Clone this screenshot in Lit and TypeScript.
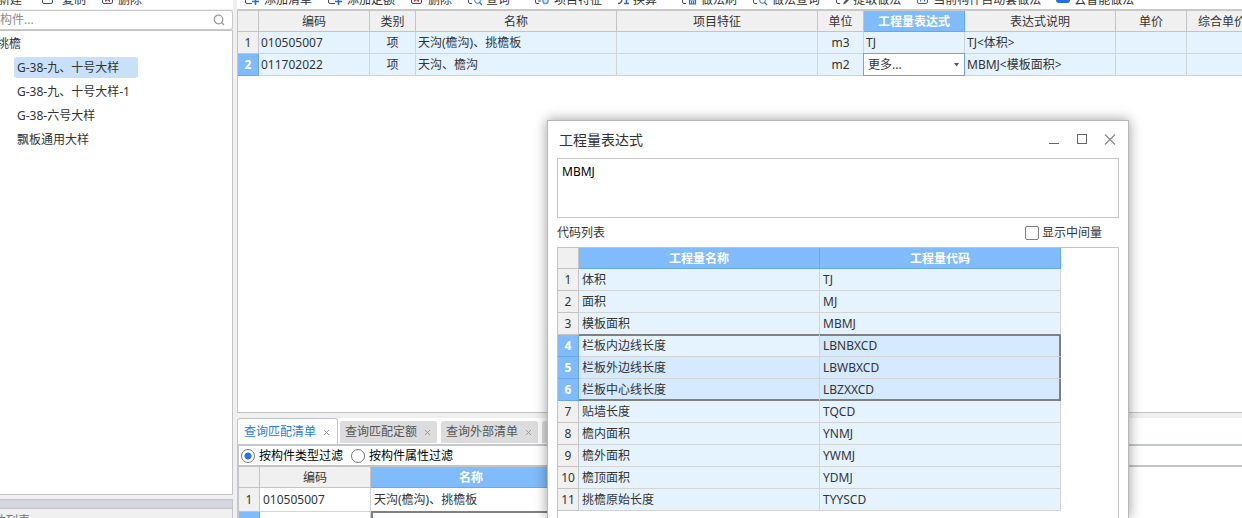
import { LitElement, html, css, svg, nothing } from "lit";
import { customElement, state } from "lit/decorators.js";
import { classMap } from "lit/directives/class-map.js";

const base = css`
  * { box-sizing: border-box; }
  :host {
    font-family: "Noto Sans", "Noto Sans CJK SC", sans-serif;
    font-size: 12px;
    line-height: 20px;
    color: #333;
  }
  button, input, select, textarea { font: inherit; color: inherit; margin: 0; }
  button { border: 0; padding: 0; background: none; }
`;

const gridStyles = css`
  table { border-collapse: separate; border-spacing: 0; table-layout: fixed; width: 0; }
  th, td {
    height: 22px;
    padding: 0 0 0 3px;
    line-height: 20px;
    font-weight: 400;
    text-align: left;
    white-space: nowrap;
    overflow: hidden;
    border-right: 1px solid #d4d4d4;
    border-bottom: 1px solid #d4d4d4;
  }
  td { background: #e5f3ff; }
  th { background: #f0f0f0; padding: 0; text-align: center; border-color: #c4c4c4; }
  thead th { height: 21px; padding-top: 2px; line-height: 18px; }
  th.on { background: #80bbfb; color: #fff; font-weight: 700; border-color: #69a7ea; }
  td.mid { text-align: center; padding: 0; }
  .w-no { width: 21px; }
  .w-code { width: 111px; }
  .w-kind { width: 46px; }
  .w-name { width: 201px; }
  .w-expr { width: 101px; }
  .w-note { width: 151px; }
  .w-price { width: 71px; }
  .w-half { width: 241px; }
`;

const dark = "#4a4f63";
const blue = "#1f6fe0";
const sheet = svg`<path d="M5 11.5H3A1.5 1.5 0 0 1 1.5 10V2.5A1.5 1.5 0 0 1 3 1h8a1.5 1.5 0 0 1 1.5 1.5V4" fill="none" stroke=${dark}/>`;
const icons: Record<string, unknown> = {
  add: svg`<path d="M8 11.5H3A1.5 1.5 0 0 1 1.5 10V2.5A1.5 1.5 0 0 1 3 1h8a1.5 1.5 0 0 1 1.5 1.5V4" fill="none" stroke=${dark}/><path d="M8 9.5h7M11.5 6v7" stroke=${blue} stroke-width="1.6"/>`,
  remove: svg`<rect x="1.5" y="1.5" width="10" height="10" rx="1.5" fill="none" stroke=${dark}/><path d="M4.5 9.5V6l4 3.5M8.5 9.5V6l-4 3.5" stroke="#d9303c" fill="none"/>`,
  copy: svg`<rect x="1.5" y="1.5" width="10" height="10" rx="1.5" fill="none" stroke=${dark}/>`,
  find: svg`${sheet}<circle cx="10.5" cy="8.5" r="2.8" fill="none" stroke=${blue}/><path d="M12.5 10.5l2.5 2.5" stroke=${blue} stroke-width="1.3"/>`,
  feature: svg`${sheet}<path d="M4 9h3" stroke=${dark}/><circle cx="11.5" cy="9" r="2.6" fill="#dceafe" stroke="#5b9af0" stroke-width="1.5"/>`,
  convert: svg`<path d="M1 11.5c3 0 4-2 4-5V2" fill="none" stroke=${dark} stroke-width="1.3"/><path d="M7 11.5h5M9.500 11V6L7.500 7.500" fill="none" stroke=${blue} stroke-width="1.6"/>`,
  brush: svg`${sheet}<path d="M8.500 12V8h6v4zM10.500 9v3M12.500 9v3" fill="none" stroke=${blue} stroke-width="1.2"/>`,
  pick: svg`${sheet}<path d="M8 12.500l1-2.500 5-5 1.500 1.500-5 5z" fill=${dark}/>`,
  auto: svg`<rect x="1.500" y="1.500" width="10" height="10" rx="1.500" fill="none" stroke=${blue}/><path d="M4.500 9.500V7.500h4v2" fill="none" stroke=${blue}/>`,
  cloud: svg`<rect x="0" y="1" width="14" height="10" rx="3" fill=${blue}/>`,
};

@customElement("tool-bar")
export class ToolBar extends LitElement {
  static properties = { items: { attribute: false } };
  declare items: [string, string, number, boolean?][];
  static styles = [base, css`
    :host { display: flex; align-items: flex-end; height: 9px; overflow: hidden; background: #fff; }
    button { display: flex; flex: none; align-items: center; gap: 4px; height: 18px; margin-right: 15px; white-space: nowrap; line-height: 18px; }
    button.group { margin-right: var(--group-gap, 24px); }
    svg { height: 16px; flex: none; }
  `];
  render() {
    return this.items.map(([icon, text, width, group]) => html`
      <button type="button" class=${classMap({ group: !!group })}>
        ${width ? html`<svg width=${width} viewBox="0 0 ${width} 16" aria-hidden="true">${icons[icon]}</svg>` : nothing}${text}
      </button>`);
  }
}

@customElement("component-panel")
export class ComponentPanel extends LitElement {
  @state() selected = 0;
  names = ["G-38-九、十号大样", "G-38-九、十号大样-1", "G-38-六号大样", "飘板通用大样"];
  tools = [["", "新建", 0, true], ["copy", "复制", 17], ["remove", "删除", 13]];
  static styles = [base, css`
    :host { display: flex; flex-direction: column; min-height: 0; margin-left: -32px; }
    tool-bar { --group-gap: 19px; padding-left: 30px; }
    .search { display: flex; align-items: center; height: 20px; margin-top: 1px; padding: 0 7px 0 8px; background: #fff; border: 1px solid #c8c8c8; border-left: 0; border-radius: 0 3px 3px 0; }
    .search input { flex: 1; min-width: 0; height: 18px; padding: 0; border: 0; outline: 0; background: none; }
    .search input::placeholder { color: #8c8c8c; opacity: 1; }
    .tree { flex: 1; min-height: 0; margin: 0; padding: 1px 0 0 28px; background: #fff; border: 1px solid #c4c4c8; overflow: hidden; }
    .root { height: 24px; line-height: 24px; }
    ul { list-style: none; margin: 0; padding: 0 0 0 17px; }
    li { height: 24px; padding: 1px 0; }
    li button { display: block; height: 21px; min-width: 124px; padding: 0 3px; border-radius: 3px; text-align: left; line-height: 20px; }
    li button.on { background: #c9e0fa; }
    .bar { height: 10px; margin-top: 4px; background: #d3d6dd; border: 1px solid #c4c4c8; }
    .list { height: 9px; overflow: hidden; padding: 2px 0 0 14px; color: #777; border-right: 1px solid #c4c4c8; }
  `];
  render() {
    return html`
      <tool-bar .items=${this.tools}></tool-bar>
      <label class="search">
        <input type="text" placeholder="搜索构件..." aria-label="搜索构件" />
        <svg width="12" height="12" viewBox="0 0 12 12" fill="none" stroke="#999" stroke-width="1.2"><circle cx="5.5" cy="5.5" r="4.3"/><path d="M8.5 8.5l2.5 2.5"/></svg>
      </label>
      <div class="tree">
        <div class="root">挑檐</div>
        <ul>${this.names.map((name, i) => html`<li><button type="button" class=${classMap({ on: i === this.selected })} @click=${() => (this.selected = i)}>${name}</button></li>`)}</ul>
      </div>
      <div class="bar"></div>
      <div class="list">构件列表</div>`;
  }
}

@customElement("bill-grid")
export class BillGrid extends LitElement {
  columns: [string, string, boolean?][] = [
    ["编码", "w-code"], ["类别", "w-kind"], ["名称", "w-name"], ["项目特征", "w-name"], ["单位", "w-kind"],
    ["工程量表达式", "w-expr", true], ["表达式说明", "w-note"], ["单价", "w-price"], ["综合单价", "w-price"],
  ];
  rows = [
    ["010505007", "项", "天沟(檐沟)、挑檐板", "", "m3", "TJ", "TJ<体积>", "", ""],
    ["011702022", "项", "天沟、檐沟", "", "m2", null, "MBMJ<模板面积>", "", ""],
  ];
  static styles = [base, gridStyles, css`
    :host { display: block; overflow: hidden; background: #fff; border: 1px solid #c4c4c4; border-top: 2px solid #c8c8c8; border-right: 0; }
    td { padding-left: 2px; }
    td.edit { padding: 0; overflow: visible; }
    .pick { position: relative; display: block; width: 102px; height: 23px; margin: -1px; }
    select { display: block; width: 100%; height: 100%; padding: 0 16px 0 4px; appearance: none; background: #fff; border: 1px solid #69a7ea; border-radius: 0; line-height: 20px; }
    .pick svg { position: absolute; right: 6px; top: 10px; }
  `];
  render() {
    return html`<table>
      <thead><tr><th class="w-no"></th>${this.columns.map(([t, w, on]) => html`<th class=${classMap({ [w]: true, on: !!on })}>${t}</th>`)}</tr></thead>
      <tbody>${this.rows.map((row, r) => html`<tr>
        <th class=${classMap({ on: r === 1 })}>${r + 1}</th>
        ${row.map((cell, c) => cell === null
          ? html`<td class="edit"><span class="pick"><select aria-label="工程量表达式"><option>更多...</option><option>MBMJ</option></select>
              <svg width="5" height="4" viewBox="0 0 5 4" aria-hidden="true"><path d="M0 0h5L2.5 3.5z" fill="#555"/></svg></span></td>`
          : html`<td class=${classMap({ mid: c === 1 || c === 4 })}>${cell}</td>`)}
      </tr>`)}</tbody>
    </table>`;
  }
}

@customElement("query-panel")
export class QueryPanel extends LitElement {
  tabs = ["查询匹配清单", "查询匹配定额", "查询外部清单", "查询清单库"];
  static styles = [base, gridStyles, css`
    :host { display: block; overflow: hidden; background: #fff; }
    .tabs { display: flex; align-items: flex-end; gap: 4px; height: 28px; border-bottom: 2px solid #c3c8ce; }
    .tab { display: flex; align-items: center; gap: 7px; height: 22px; margin-bottom: 1px; padding: 0 5px; border-radius: 3px 3px 0 0; background: #dcdcdc; color: #555; white-space: nowrap; }
    .tab.on { height: 26px; margin-right: -2px; margin-bottom: 0; padding: 0 6px; color: #2a7de0; background: #fff; border: 1px solid #c0c4ca; border-bottom: 0; }
    .tab svg { margin: 1px 1px 0 0; }
    .body { border-left: 2px solid #c3c7cc; }
    .filter { display: flex; align-items: center; gap: 8px; height: 21px; padding-left: 2px; border-bottom: 2px solid #c4c4c4; color: #000; }
    .filter label { display: flex; align-items: center; gap: 4px; height: 18px; line-height: 18px; }
    .filter input { appearance: none; width: 14px; height: 14px; border: 1px solid #777; border-radius: 50%; background: #fff; }
    .filter input:checked { background: radial-gradient(circle, #2478e0 0 3px, #fff 4px) padding-box; }
    tbody th, tbody td { height: 24px; }
    td { background: #fff; }
    .lead td:last-child { border-bottom-color: #808080; }
    .current td:last-child { box-shadow: inset 2px 1px #808080; }
  `];
  render() {
    return html`
      <div class="tabs">${this.tabs.map((t, i) => html`<button type="button" class=${classMap({ tab: true, on: i === 0 })}>${t}
        <svg width="7" height="7" viewBox="0 0 7 7" stroke="#999" aria-hidden="true"><path d="M1 1l5 5M6 1L1 6"/></svg></button>`)}</div>
      <div class="body">
        <div class="filter">
          <label><input type="radio" name="filter" checked />按构件类型过滤</label>
          <label><input type="radio" name="filter" />按构件属性过滤</label>
        </div>
        <table>
          <thead><tr><th class="w-no"></th><th class="w-code">编码</th><th class="w-name on">名称</th></tr></thead>
          <tbody>
            <tr class="lead"><th>1</th><td>010505007</td><td>天沟(檐沟)、挑檐板</td></tr>
            <tr class="current"><th class="on"></th><td></td><td></td></tr>
          </tbody>
        </table>
      </div>`;
  }
}

@customElement("expression-dialog")
export class ExpressionDialog extends LitElement {
  rows = [
    ["体积", "TJ"], ["面积", "MJ"], ["模板面积", "MBMJ"], ["栏板内边线长度", "LBNBXCD"], ["栏板外边线长度", "LBWBXCD"],
    ["栏板中心线长度", "LBZXXCD"], ["贴墙长度", "TQCD"], ["檐内面积", "YNMJ"], ["檐外面积", "YWMJ"], ["檐顶面积", "YDMJ"], ["挑檐原始长度", "TYYSCD"],
  ];
  static styles = [base, gridStyles, css`
    :host { display: flex; flex-direction: column; padding: 0 9px; background: #fff; border: 1px solid #b8b8b8; border-bottom: 0; box-shadow: 0 0 12px rgba(0, 0, 0, 0.4); }
    header { display: flex; align-items: center; justify-content: space-between; height: 37px; padding: 0 3px 0 2px; }
    h1 { margin: 0; font-size: 14px; line-height: 20px; font-weight: 400; }
    .controls { display: flex; gap: 16px; }
    .controls button { display: block; width: 12px; height: 12px; }
    .controls svg { display: block; }
    textarea { display: block; flex: none; width: 100%; height: 60px; padding: 3px 4px; resize: none; border: 1px solid #c8c8c8; border-radius: 0; outline: 0; color: #000; line-height: 20px; }
    .caption { display: flex; align-items: center; justify-content: space-between; height: 29px; padding-right: 17px; }
    .caption label { display: flex; align-items: center; gap: 3px; }
    .caption input { appearance: none; width: 14px; height: 14px; border: 1px solid #808080; border-radius: 2px; background: #fff; }
    .box { flex: 1; min-height: 0; overflow: hidden; border: 1px solid #c4c4c4; border-bottom: 0; }
    .sel td { background: #d5e9ff; }
    .sel.first td:nth-child(2) { background: #e5f3ff; }
    .above td, .last td { border-bottom-color: #808080; }
    .sel td:last-child { border-right-color: #808080; box-shadow: inset -1px 0 #808080; }
    .first td { box-shadow: inset 0 1px #808080; }
    .last td { box-shadow: inset 0 -1px #808080; }
    .sel.first td:last-child { box-shadow: inset -1px 1px #808080; }
    .sel.last td:last-child { box-shadow: inset -1px -1px #808080; }
  `];
  render() {
    return html`
      <header>
        <h1>工程量表达式</h1>
        <div class="controls">
          <button type="button" aria-label="最小化"><svg width="12" height="12" viewBox="0 0 12 12"><path d="M1 9.5h10" stroke="#666"/></svg></button>
          <button type="button" aria-label="最大化"><svg width="12" height="12" viewBox="0 0 12 12"><rect x="1.5" y="0.5" width="9" height="9" fill="none" stroke="#666"/></svg></button>
          <button type="button" aria-label="关闭"><svg width="12" height="12" viewBox="0 0 12 12"><path d="M1 0.500l10 10M11 0.500L1 10.500" stroke="#888" stroke-width="1.2"/></svg></button>
        </div>
      </header>
      <textarea aria-label="工程量表达式" .value=${"MBMJ"}></textarea>
      <div class="caption"><span>代码列表</span><label><input type="checkbox" />显示中间量</label></div>
      <div class="box"><table>
        <thead><tr><th class="w-no"></th><th class="w-half on">工程量名称</th><th class="w-half on">工程量代码</th></tr></thead>
        <tbody>${this.rows.map(([name, code], i) => {
          const sel = i > 2 && i < 6;
          return html`<tr class=${classMap({ sel, above: i === 2, first: i === 3, last: i === 5 })}>
            <th class=${classMap({ on: sel })}>${i + 1}</th><td>${name}</td><td>${code}</td></tr>`;
        })}</tbody>
      </table></div>`;
  }
}

@customElement("app-root")
export class AppRoot extends LitElement {
  tools = [
    ["add", "添加清单", 16], ["add", "添加定额", 16], ["remove", "删除", 14], ["find", "查询", 15, true], ["feature", "项目特征", 16],
    ["convert", "换算", 12, true], ["brush", "做法刷", 16], ["find", "做法查询", 16], ["pick", "提取做法", 14],
    ["auto", "当前构件自动套做法", 13], ["cloud", "云智能做法", 14],
  ];
  static styles = [base, css`
    :host { position: relative; display: grid; grid-template-columns: 233px minmax(0, 1fr); grid-template-rows: minmax(0, 1fr); gap: 4px; height: 100vh; overflow: hidden; background: #f0f0f0; }
    main { display: flex; flex-direction: column; min-height: 0; }
    main tool-bar { padding-left: 7px; }
    bill-grid { flex: 1; min-height: 0; }
    query-panel { height: 100px; margin-top: 5px; }
    expression-dialog { position: absolute; left: 547px; top: 120px; bottom: 0; width: 582px; }
  `];
  render() {
    return html`
      <component-panel></component-panel>
      <main>
        <tool-bar .items=${this.tools}></tool-bar>
        <bill-grid></bill-grid>
        <query-panel></query-panel>
      </main>
      <expression-dialog role="dialog" aria-label="工程量表达式"></expression-dialog>`;
  }
}
